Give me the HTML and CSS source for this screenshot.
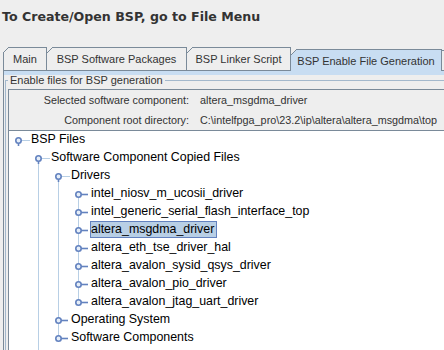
FILE: index.html
```html
<!DOCTYPE html>
<html lang="en">
<head>
    <meta charset="UTF-8">
    <title>BSP Editor</title>
    <link rel="stylesheet" href="styles.css">
</head>
<body>
    <svg class="sprite" width="0" height="0">
        <symbol id="h-open" viewBox="0 0 21 18">
            <path d="M12 9.5H21" stroke="#b8cfe5" fill="none"/>
            <path d="M9.5 12V15" stroke="#6382bf" stroke-width="1.6" fill="none"/>
            <circle cx="9.5" cy="9.5" r="2.7" fill="#e6eef8" stroke="#6382bf" stroke-width="1.6"/>
        </symbol>
        <symbol id="h-closed" viewBox="0 0 21 18">
            <path d="M12 9.5H19" stroke="#6382bf" stroke-width="1.6" fill="none"/>
            <circle cx="9.5" cy="9.5" r="2.7" fill="#e6eef8" stroke="#6382bf" stroke-width="1.6"/>
        </symbol>
    </svg>

    <h1 class="title">To Create/Open BSP, go to File Menu</h1>

    <div class="tabs">
        <div class="tab tab-main">Main</div>
        <div class="tab tab-packages">BSP Software Packages</div>
        <div class="tab tab-linker">BSP Linker Script</div>
        <div class="tab tab-enable active">BSP Enable File Generation</div>
        <div class="tab tab-more"></div>
    </div>

    <div class="panel">
        <fieldset class="group">
            <legend>Enable files for BSP generation</legend>
            <div class="box">
                <div class="info">
                    <span class="info-label">Selected software component:</span>
                    <span class="info-value">altera_msgdma_driver</span>
                    <span class="info-label">Component root directory:</span>
                    <span class="info-value">C:\intelfpga_pro\23.2\ip\altera\altera_msgdma\top</span>
                </div>
                <ul class="tree">
                    <li>
                        <div class="row"><svg class="handle"><use href="#h-open"/></svg><span class="label">BSP Files</span></div>
                        <ul class="branch d1 open-end">
                            <li>
                                <div class="row ind1"><svg class="handle"><use href="#h-open"/></svg><span class="label">Software Component Copied Files</span></div>
                                <ul class="branch d2">
                                    <li>
                                        <div class="row ind2"><svg class="handle"><use href="#h-open"/></svg><span class="label">Drivers</span></div>
                                        <ul class="branch d3">
                                            <li><div class="row ind3"><svg class="handle"><use href="#h-closed"/></svg><span class="label">intel_niosv_m_ucosii_driver</span></div></li>
                                            <li><div class="row ind3"><svg class="handle"><use href="#h-closed"/></svg><span class="label">intel_generic_serial_flash_interface_top</span></div></li>
                                            <li><div class="row ind3"><svg class="handle"><use href="#h-closed"/></svg><span class="label selected">altera_msgdma_driver</span></div></li>
                                            <li><div class="row ind3"><svg class="handle"><use href="#h-closed"/></svg><span class="label">altera_eth_tse_driver_hal</span></div></li>
                                            <li><div class="row ind3"><svg class="handle"><use href="#h-closed"/></svg><span class="label">altera_avalon_sysid_qsys_driver</span></div></li>
                                            <li><div class="row ind3"><svg class="handle"><use href="#h-closed"/></svg><span class="label">altera_avalon_pio_driver</span></div></li>
                                            <li><div class="row ind3"><svg class="handle"><use href="#h-closed"/></svg><span class="label">altera_avalon_jtag_uart_driver</span></div></li>
                                        </ul>
                                    </li>
                                    <li><div class="row ind2"><svg class="handle"><use href="#h-closed"/></svg><span class="label">Operating System</span></div></li>
                                    <li><div class="row ind2"><svg class="handle"><use href="#h-closed"/></svg><span class="label">Software Components</span></div></li>
                                </ul>
                            </li>
                        </ul>
                    </li>
                </ul>
            </div>
        </fieldset>
    </div>
</body>
</html>
```

FILE: styles.css
```css
body {
    margin: 0;
    background: #eeeeee;
    font-family: "Liberation Sans", Arial, sans-serif;
    color: #333333;
    overflow: hidden;
    height: 350px;
}
.sprite {
    position: absolute;
    width: 0;
    height: 0;
}
.title {
    margin: 0;
    padding: 5px 2px 0;
    font: bold 12.6px/24px "DejaVu Sans", sans-serif;
    color: #333333;
}
.tabs {
    display: flex;
    align-items: flex-end;
    height: 23px;
    margin-top: 18px;
    padding-left: 3px;
    position: relative;
    z-index: 1;
}
.tab {
    position: relative;
    box-sizing: border-box;
    flex: none;
    height: 23px;
    border: 1px solid #7a8a99;
    border-bottom: none;
    background: #eeeeee;
    font-size: 11px;
    line-height: 22px;
    text-align: center;
    white-space: nowrap;
}
.tab + .tab {
    margin-left: -1px;
}
.tab::before {
    content: "";
    position: absolute;
    left: 0;
    top: -1px;
    width: 7px;
    height: 7px;
    background: linear-gradient(135deg, #eeeeee 0 3.6px, #7a8a99 3.6px 4.9px, transparent 4.9px);
}
.tab-main::before {
    left: -1px;
}
.tab-main { width: 44px; }
.tab-packages { width: 141px; }
.tab-linker { width: 105px; }
.tab-enable { width: 152px; }
.tab-more {
    width: 3px;
    height: 20px;
    border-right: none;
}
.tab-more::before {
    display: none;
}
.tab.active {
    height: 22px;
    margin-bottom: -1px;
    background: #c8ddf2;
}
.panel {
    margin-left: 3px;
    border-top: 1px solid #7a8a99;
    border-left: 1px solid #7a8a99;
    box-shadow: inset 0 4px 0 #c8ddf2;
    padding-top: 3px;
}
.group {
    margin: 0 0 0 1px;
    padding: 0 0 0 2px;
    border: 1px solid #a3b8cc;
    border-right: none;
    border-bottom: none;
    min-width: 0;
}
.group legend {
    padding: 0 2px;
    font-size: 11px;
    line-height: 13px;
}
.box {
    margin-top: 2px;
    border-top: 1px solid #7a8a99;
    border-left: 1px solid #7a8a99;
}
.info {
    display: grid;
    grid-template-columns: 180px auto;
    column-gap: 11px;
    height: 40px;
    border-bottom: 1px solid #7a8a99;
    font-size: 10.8px;
    line-height: 20px;
    white-space: nowrap;
    overflow: hidden;
}
.info-label {
    text-align: right;
}
.tree,
.tree ul {
    list-style: none;
    margin: 0;
    padding: 0;
}
.tree {
    background: #ffffff;
    color: #000000;
    font-size: 12.4px;
    height: 230px;
    overflow: hidden;
}
.branch {
    position: relative;
}
.branch::before {
    content: "";
    position: absolute;
    top: 9px;
    bottom: 9px;
    width: 1px;
    background: #b8cfe5;
}
.d1::before { left: 29px; }
.d2::before { left: 49px; }
.d3::before { left: 69px; }
.branch.open-end::before {
    bottom: -60px;
}
.row {
    display: flex;
    align-items: flex-start;
    height: 18px;
    white-space: nowrap;
}
.ind1 { padding-left: 20px; }
.ind2 { padding-left: 40px; }
.ind3 { padding-left: 60px; }
.handle {
    position: relative;
    z-index: 1;
    flex: none;
    width: 21px;
    height: 18px;
}
.label {
    border: 1px solid transparent;
    padding: 0 2px 0 0;
    line-height: 15px;
}
.label.selected {
    background: #b8cfe5;
    border-color: #6382bf;
}
```
